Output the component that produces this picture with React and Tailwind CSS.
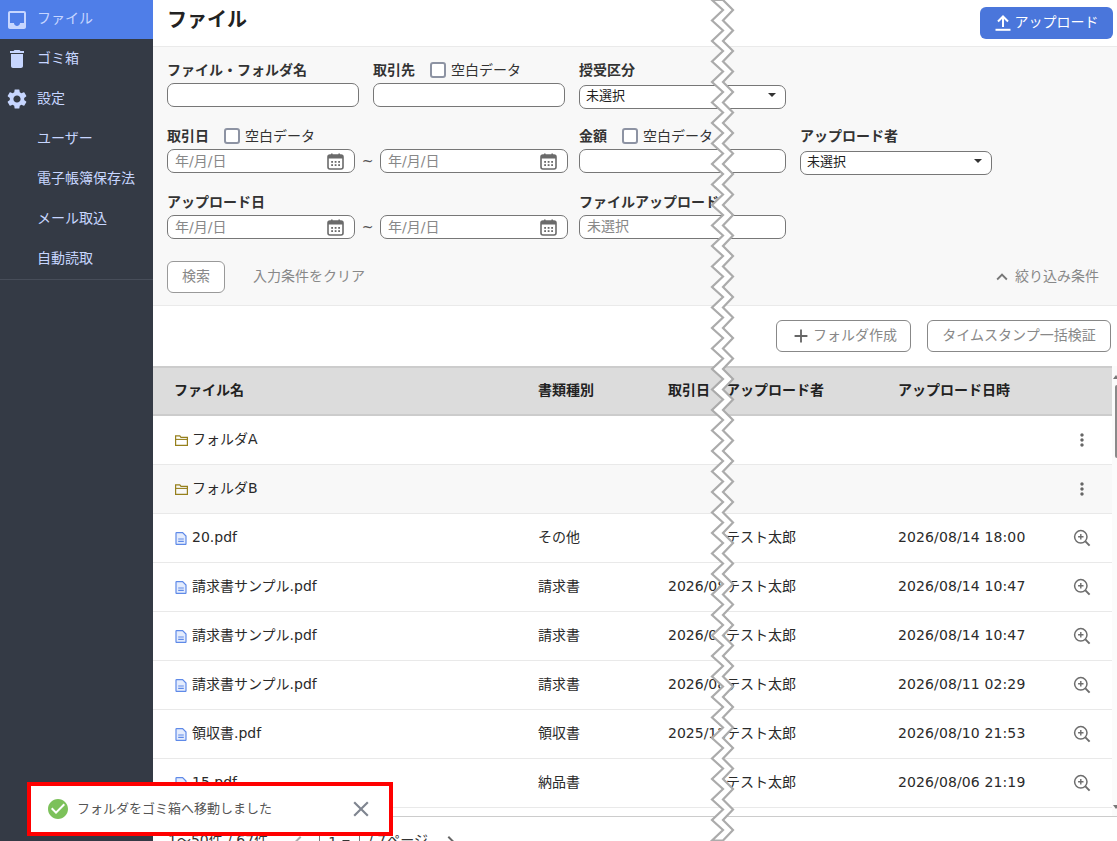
import React from "react";
import { MdInbox, MdDelete, MdSettings, MdAdd, MdExpandLess, MdMoreVert, MdCheckCircle, MdClose, MdChevronLeft, MdChevronRight } from "react-icons/md";

const FONT = '"DejaVu Sans", "Noto Sans CJK JP", sans-serif';

function CalendarIcon() {
  return (
    <svg width="17" height="17" viewBox="0 0 17 17" className="shrink-0">
      <rect x="1" y="2" width="15" height="14" rx="2" fill="#fff" stroke="#6b6b6b" strokeWidth="1.6" />
      <rect x="1" y="2" width="15" height="3.5" fill="#6b6b6b" />
      <rect x="4" y="0.5" width="1.6" height="3" fill="#6b6b6b" />
      <rect x="11.4" y="0.5" width="1.6" height="3" fill="#6b6b6b" />
      {[4.2, 7.7, 11.2].map((x) => (
        <g key={x}>
          <rect x={x} y="8" width="1.8" height="1.8" fill="#6b6b6b" />
          <rect x={x} y="11.2" width="1.8" height="1.8" fill="#6b6b6b" />
        </g>
      ))}
    </svg>
  );
}

function UploadIcon() {
  return (
    <svg width="16" height="17" viewBox="0 0 16 17" fill="none" className="shrink-0">
      <path d="M8 13V2.5M3 7.5l5-5 5 5" stroke="#fff" strokeWidth="2" />
      <path d="M0.5 15.8h15" stroke="#fff" strokeWidth="2" />
    </svg>
  );
}

function FolderIcon() {
  return (
    <svg width="13" height="11" viewBox="0 0 13 11" fill="none" className="shrink-0">
      <path d="M.6 10.4V.8h4.2l1.2 1.6h6.4v8z" stroke="#96801c" strokeWidth="1.2" />
      <path d="M.6 4.4h11.8" stroke="#96801c" strokeWidth="1.1" />
    </svg>
  );
}

function FileIcon() {
  return (
    <svg width="12" height="13" viewBox="0 0 12 13" fill="none" className="shrink-0">
      <path d="M1 1.2a.6.6 0 0 1 .6-.6h6l3.4 3.4v7.8a.6.6 0 0 1-.6.6H1.6a.6.6 0 0 1-.6-.6z" fill="#e4ecfd" stroke="#5f8ae8" strokeWidth="1.2" />
      <path d="M3.2 7h5.6M3.2 9.4h5.6" stroke="#5f8ae8" strokeWidth="1.1" />
    </svg>
  );
}

function ZoomPlusIcon() {
  return (
    <svg width="18" height="18" viewBox="0 0 18 18" fill="none">
      <circle cx="7.8" cy="7.8" r="6.2" stroke="#6d6d6d" strokeWidth="1.5" />
      <path d="M12.4 12.4 16.6 16.6" stroke="#6d6d6d" strokeWidth="2" />
      <path d="M7.8 5.1v5.4M5.1 7.8h5.4" stroke="#6d6d6d" strokeWidth="1.4" />
    </svg>
  );
}

function Zigzag() {
  const period = 20.5;
  const left = [];
  const right = [];
  for (let i = 0; i <= 41; i++) {
    const y0 = i * period;
    left.push([12, y0]);
    right.push([23, y0]);
    if (y0 + 10 < 841) {
      left.push([23, y0 + 10]);
      right.push([33, y0 + 10]);
    }
  }
  const pts = [...right, ...left.reverse()].map((p) => p.join(",")).join(" ");
  return (
    <svg width="46" height="841" viewBox="0 0 46 841" className="absolute left-[700px] top-0 z-10">
      <polygon points={pts} fill="#fff" stroke="#ababab" strokeWidth="2.2" />
    </svg>
  );
}

function NavItem({ icon, label }) {
  return (
    <div className="flex h-10 items-center text-[14px] text-[#c7d6ff]">
      <span className="flex w-[37px] shrink-0 justify-center pr-[3px]">{icon}</span>
      <span className="-translate-y-px">{label}</span>
    </div>
  );
}

function Label({ children }) {
  return <span className="text-[14px] font-bold leading-[20px] text-[#333]">{children}</span>;
}

function Blank() {
  return (
    <span className="ml-[15px] flex items-center gap-[5px] text-[14px] leading-[20px] text-[#333]">
      <span className="h-4 w-4 rounded-[3px] border-2 border-[#8d93a3] bg-white" />
      空白データ
    </span>
  );
}

const inputCls = "h-6 rounded-[7px] border border-[#777] bg-white";

function TextBox({ w, placeholder }) {
  return (
    <input
      readOnly
      placeholder={placeholder}
      className={`${inputCls} ${w} px-[7px] pb-[2px] text-[14px] text-[#333] placeholder:text-[#888]`}
    />
  );
}

function SelectBox({ w }) {
  return (
    <div className={`relative ${w}`}>
      <select className={`${inputCls} w-full appearance-none pb-[3px] pl-[6px] text-[13px] text-[#222]`} defaultValue="未選択">
        <option>未選択</option>
      </select>
      <span className="pointer-events-none absolute right-[10px] top-[10px] h-0 w-0 border-x-[4px] border-t-[4px] border-x-transparent border-t-[#333]" />
    </div>
  );
}

function DateBox() {
  return (
    <div className={`${inputCls} flex w-[188px] items-center justify-between pl-[7px] pr-[10px] text-[14px] text-[#888]`}>
      <span>年/月/日</span>
      <CalendarIcon />
    </div>
  );
}

function DateRange() {
  return (
    <div className="flex items-center">
      <DateBox />
      <span className="w-[25px] text-center text-[14px] text-[#555]">~</span>
      <DateBox />
    </div>
  );
}

const rows = [
  ["folder", "フォルダA"],
  ["folder", "フォルダB"],
  ["file", "20.pdf", "その他", "", "テスト太郎", "2026/08/14 18:00"],
  ["file", "請求書サンプル.pdf", "請求書", "2026/08/01", "テスト太郎", "2026/08/14 10:47"],
  ["file", "請求書サンプル.pdf", "請求書", "2026/08/01", "テスト太郎", "2026/08/14 10:47"],
  ["file", "請求書サンプル.pdf", "請求書", "2026/08/01", "テスト太郎", "2026/08/11 02:29"],
  ["file", "領収書.pdf", "領収書", "2025/12/01", "テスト太郎", "2026/08/10 21:53"],
  ["file", "15.pdf", "納品書", "", "テスト太郎", "2026/08/06 21:19"],
];

export default function App() {
  return (
    <div className="relative flex h-[841px] w-[1117px] overflow-hidden bg-white" style={{ fontFamily: FONT }}>
      <aside className="flex w-[153px] shrink-0 flex-col bg-[#343a45]">
        <div className="border-b border-[#474d59]">
          <div className="flex h-[39px] items-center bg-[#4f7ee8] text-[14px] text-[#c7d6ff]">
            <span className="flex w-[37px] shrink-0 justify-center pr-[3px]"><MdInbox size={24} /></span>
            <span className="-translate-y-px">ファイル</span>
          </div>
          <NavItem icon={<MdDelete size={24} />} label="ゴミ箱" />
          <NavItem icon={<MdSettings size={24} />} label="設定" />
          <NavItem label="ユーザー" />
          <NavItem label="電子帳簿保存法" />
          <NavItem label="メール取込" />
          <NavItem label="自動読取" />
        </div>
      </aside>

      <main className="flex min-w-0 flex-1 flex-col">
        <header className="flex h-[47px] shrink-0 items-start justify-between border-b border-[#eaeaea] pl-[14px] pr-[4px]">
          <h1 className="mt-[5px] text-[20px] font-bold leading-[30px] text-[#222]">ファイル</h1>
          <button className="mt-[7px] flex h-8 w-[133px] items-center justify-center gap-[4px] rounded-[6px] bg-[#4a76db] pb-[2px] text-[14px] text-white">
            <UploadIcon />
            アップロード
          </button>
        </header>

        <section className="flex h-[259px] shrink-0 flex-col border-b border-[#eaeaea] bg-[#f8f8f8] pl-[14px] pr-[18px] pt-[13px]">
          <div className="flex h-[66px] gap-[14px]">
            <div className="flex w-[192px] flex-col gap-[3px]">
              <Label>ファイル・フォルダ名</Label>
              <TextBox w="w-[192px]" />
            </div>
            <div className="flex w-[192px] flex-col gap-[3px]">
              <div className="flex items-center"><Label>取引先</Label><Blank /></div>
              <TextBox w="w-[192px]" />
            </div>
            <div className="flex w-[207px] flex-col gap-[3px]">
              <Label>授受区分</Label>
              <SelectBox w="w-[207px]" />
            </div>
          </div>
          <div className="flex h-[66px] gap-[11px]">
            <div className="flex flex-col gap-[3px]">
              <div className="flex items-center"><Label>取引日</Label><Blank /></div>
              <DateRange />
            </div>
            <div className="flex w-[207px] flex-col gap-[3px]">
              <div className="flex items-center"><Label>金額</Label><Blank /></div>
              <TextBox w="w-[207px]" />
            </div>
            <div className="ml-[3px] flex w-[192px] flex-col gap-[3px]">
              <Label>アップロード者</Label>
              <SelectBox w="w-[192px]" />
            </div>
          </div>
          <div className="flex h-[66px] gap-[11px]">
            <div className="flex flex-col gap-[3px]">
              <Label>アップロード日</Label>
              <DateRange />
            </div>
            <div className="flex w-[207px] flex-col gap-[3px]">
              <Label>ファイルアップロード</Label>
              <TextBox w="w-[207px]" placeholder="未選択" />
            </div>
          </div>
          <div className="mt-[3px] flex items-center justify-between">
            <div className="flex items-center gap-[28px]">
              <button className="h-8 w-[58px] rounded-[6px] border border-[#999] bg-white pb-[2px] text-[14px] text-[#888]">検索</button>
              <span className="-translate-y-px text-[14px] text-[#888]">入力条件をクリア</span>
            </div>
            <div className="flex items-center gap-[2px] text-[14px] text-[#888]">
              <MdExpandLess size={22} className="text-[#777]" />
              <span className="-translate-y-px">絞り込み条件</span>
            </div>
          </div>
        </section>

        <div className="flex h-[60px] shrink-0 items-start justify-end gap-4 pr-[6px] pt-[14px]">
          <button className="flex h-8 w-[135px] items-center justify-center gap-[1px] rounded-[6px] border border-[#888] text-[14px] text-[#888]">
            <MdAdd size={22} className="text-[#666]" />
            <span className="-translate-y-px">フォルダ作成</span>
          </button>
          <button className="h-8 w-[184px] rounded-[6px] border border-[#888] pb-[2px] text-[14px] text-[#888]">タイムスタンプ一括検証</button>
        </div>

        <div className="flex h-[450px] shrink-0">
          <div className="flex min-w-0 flex-1 flex-col">
            <div className="flex h-[50px] shrink-0 items-center border-y-2 border-[#ccc] bg-[#dcdcdc] pb-[2px] text-[14px] font-bold text-[#222]">
              <span className="w-[385px] pl-[21px]">ファイル名</span>
              <span className="w-[130px]">書類種別</span>
              <span className="w-[58px]">取引日</span>
              <span className="w-[172px]">アップロード者</span>
              <span>アップロード日時</span>
            </div>
            {rows.map((r, i) => (
              <div key={i} className={`flex h-[49px] shrink-0 items-center border-b border-[#e9e9e9] text-[14px] text-[#2a2a2a] ${i === 1 ? "bg-[#f8f8f8]" : ""}`}>
                <span className={`flex w-[385px] items-center pl-[22px] ${r[0] === "folder" ? "gap-[4px]" : "gap-[5px]"}`}>
                  {r[0] === "folder" ? <FolderIcon /> : <FileIcon />}
                  <span className="-translate-y-px">{r[1]}</span>
                </span>
                <span className="w-[130px] -translate-y-px">{r[2]}</span>
                <span className="w-[58px] -translate-y-px overflow-hidden whitespace-nowrap">{r[3]}</span>
                <span className="w-[172px] -translate-y-px">{r[4]}</span>
                <span className="w-[171px] -translate-y-px whitespace-nowrap tracking-[0.12px]">{r[5]}</span>
                <span className="flex w-[26px] justify-center">
                  {r[0] === "folder" ? <MdMoreVert size={20} className="text-[#666]" /> : <ZoomPlusIcon />}
                </span>
              </div>
            ))}
          </div>
          <div className="relative w-[5px] shrink-0 bg-[#fbfbfb]">
            <span className="absolute left-[1px] top-[9px] h-0 w-0 border-x-[3px] border-b-[4px] border-x-transparent border-b-[#777]" />
            <div className="absolute left-[3px] top-[19px] h-[73px] w-[2px] rounded-l-sm bg-[#8a8a8a]" />
            <span className="absolute bottom-[7px] left-[1px] h-0 w-0 border-x-[3px] border-t-[4px] border-x-transparent border-t-[#777]" />
          </div>
        </div>

        <div className="flex shrink-0 items-start border-t border-[#ccc] pl-[15px] pt-[13px] text-[14px] leading-[20px] text-[#333]">
          <span>1〜50件 / 67件</span>
          <MdChevronLeft size={24} className="ml-[18px] text-[#aaa]" />
          <span className="relative ml-[9px] flex h-6 w-[41px] items-center border border-[#777] pl-[8px]">
            1
            <span className="absolute right-[9px] top-[9px] h-0 w-0 border-x-[4px] border-t-[4px] border-x-transparent border-t-[#333]" />
          </span>
          <span className="ml-[8px]">/ 7ページ</span>
          <MdChevronRight size={24} className="ml-[11px] text-[#666]" />
        </div>
      </main>

      <Zigzag />

      <div className="absolute left-[27px] top-[782px] z-20 flex h-[54px] w-[366px] items-center border-[4px] border-[#ff0000] bg-white pl-[15px] pr-[15px] text-[13px] text-[#555]">
        <MdCheckCircle size={24} className="text-[#7cc15a]" />
        <span className="ml-[7px] flex-1">フォルダをゴミ箱へ移動しました</span>
        <MdClose size={26} className="text-[#7f8590]" />
      </div>
    </div>
  );
}
